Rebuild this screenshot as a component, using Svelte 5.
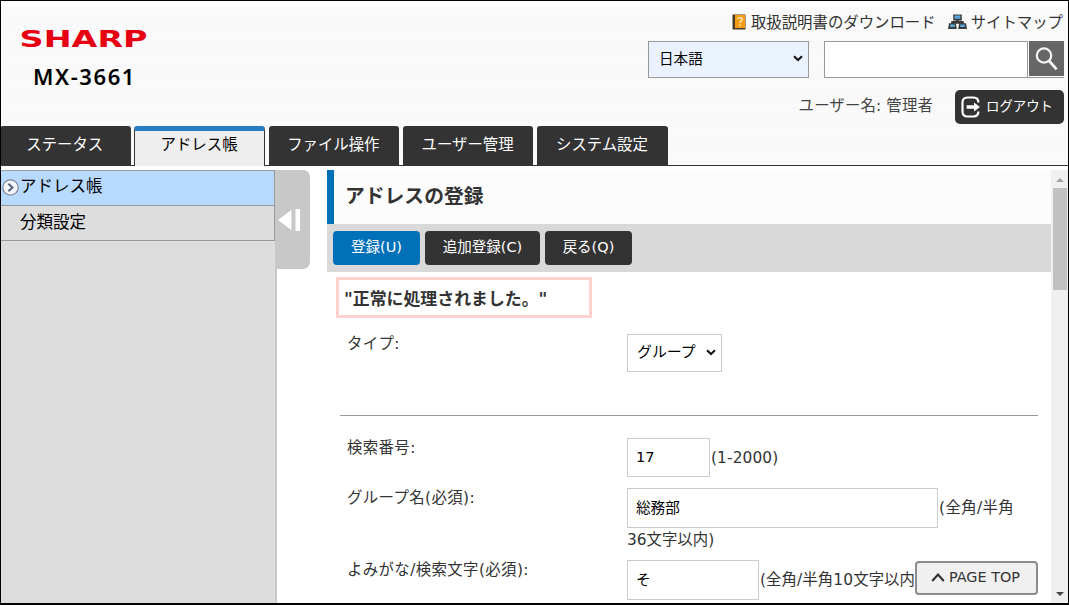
<script lang="ts">
  const tabs = ['ステータス', 'アドレス帳', 'ファイル操作', 'ユーザー管理', 'システム設定'];
  const menu = ['アドレス帳', '分類設定'];

  let activeTab = $state(1);
  let activeMenu = $state(0);
  let keyword = $state('');
  let searchNumber = $state('17');
  let groupName = $state('総務部');
  let reading = $state('そ');
</script>

<div class="window">
  <header>
    <div class="top">
      <div class="brand">
        <svg class="logo" width="140" height="36" viewBox="0 0 140 36" role="img" aria-label="SHARP">
          <text x="3.6" y="25.8" textLength="128" lengthAdjust="spacingAndGlyphs">SHARP</text>
        </svg>
        <div class="model">MX-3661</div>
      </div>

      <div class="tools">
        <div class="links">
          <a href="#manual">
            <svg width="14" height="16" viewBox="0 0 14 16">
              <rect x=".5" y=".5" width="13" height="15" fill="#4a3a28" />
              <rect x="3" y="1" width="10" height="13" fill="#f59c14" />
              <path d="M5.6 5.2Q5.8 3.6 8 3.6Q10.3 3.7 10.2 5.4Q10.1 6.6 8.8 7.2Q8 7.7 8 9M8 10.4V12" fill="none" stroke="#fff0c0" stroke-width="1.4" />
            </svg>
            <span>取扱説明書のダウンロード</span>
          </a>
          <a href="#sitemap">
            <svg width="19" height="16" viewBox="0 0 19 16">
              <path d="M9.5 5V8.4M4.5 11V8.4H14.5V11" fill="none" stroke="#3a3a3a" stroke-width="2.6" />
              <path d="M5.2 .6H13.8V6.6H5.2ZM1 9.2H7.8L8.8 15H0ZM11.2 9.2H18L19 15H10.2Z" fill="#3a3a3a" />
              <path d="M6.6 1.6H12.4V4.8H6.6ZM2.2 10.4H6.8V13H2.2ZM12.2 10.4H16.8V13H12.2Z" fill="#5aa9dc" />
            </svg>
            <span>サイトマップ</span>
          </a>
        </div>

        <div class="search-row">
          <button class="select language">
            <span>日本語</span>
            <svg width="10" height="7" viewBox="0 0 10 7"><path d="M1 1.2L5 5L9 1.2" /></svg>
          </button>
          <div class="search">
            <input bind:value={keyword} aria-label="検索" />
            <button aria-label="検索">
              <svg width="30" height="30" viewBox="0 0 30 30">
                <circle cx="10" cy="10.5" r="7.2" fill="none" stroke="#f4f4f4" stroke-width="2.2" />
                <path d="M15 15.8L22.6 24.4" stroke="#f4f4f4" stroke-width="2.8" />
              </svg>
            </button>
          </div>
        </div>

        <div class="user-row">
          <span class="user">ユーザー名: 管理者</span>
          <button class="logout">
            <svg width="20" height="22" viewBox="0 0 20 22">
              <path d="M17.4 6.4Q17.4 1.5 12.5 1.5H6.5Q1.5 1.5 1.5 6.5V15.5Q1.5 20.5 6.5 20.5H12.5Q17.4 20.5 17.4 15.6" fill="none" stroke="#fff" stroke-width="2.2" />
              <path d="M5.6 9.2H13V6.5L19 11L13 15.5V12.8H5.6Z" fill="#fff" />
            </svg>
            <span>ログアウト</span>
          </button>
        </div>
      </div>
    </div>

    <nav class="tabs">
      {#each tabs as tab, index}
        <button class="tab" class:active={index === activeTab} onclick={() => (activeTab = index)}>
          {tab}
        </button>
      {/each}
    </nav>
  </header>

  <div class="body">
    <aside>
      {#each menu as item, index}
        <button class="item" class:current={index === activeMenu} onclick={() => (activeMenu = index)}>
          <span class="mark">
            {#if index === activeMenu}
              <svg width="17" height="17" viewBox="0 0 17 17">
                <circle cx="8.5" cy="8.5" r="7.7" fill="#f4f5f9" stroke="#7d879c" stroke-width="1.2" />
                <path d="M6.4 4.8L10.4 8.5L6.4 12.2" fill="none" stroke="#5c6784" stroke-width="2.2" />
              </svg>
            {/if}
          </span>
          {item}
        </button>
      {/each}
    </aside>

    <button class="handle" aria-label="メニューを閉じる">
      <svg width="22" height="22" viewBox="0 0 22 22">
        <path d="M0 11L13.4 1V21Z" fill="#fff" />
        <rect x="17.5" y="0" width="4.5" height="22" fill="#fff" />
      </svg>
    </button>

    <main>
      <h1>アドレスの登録</h1>
      <div class="toolbar">
        <button class="primary">登録(U)</button>
        <button class="wide">追加登録(C)</button>
        <button>戻る(Q)</button>
      </div>

      <p class="message">"正常に処理されました。"</p>

      <div class="row type">
        <span class="label">タイプ:</span>
        <button class="select group">
          <span>グループ</span>
          <svg width="10" height="7" viewBox="0 0 10 7"><path d="M1 1.2L5 5L9 1.2" /></svg>
        </button>
      </div>

      <hr />

      <div class="row number">
        <label class="label" for="number">検索番号:</label>
        <div class="field"><input id="number" bind:value={searchNumber} /><span class="hint">(1-2000)</span></div>
      </div>
      <div class="row name">
        <label class="label" for="name">グループ名(必須):</label>
        <div>
          <div class="field"><input id="name" bind:value={groupName} /><span class="hint spaced">(全角/半角</span></div>
          <div class="rest">36文字以内)</div>
        </div>
      </div>
      <div class="row reading">
        <label class="label" for="reading">よみがな/検索文字(必須):</label>
        <div class="field"><input id="reading" bind:value={reading} /><span class="hint">(全角/半角10文字以内</span></div>
      </div>
    </main>

    <div class="scrollbar">
      <svg width="8" height="4" viewBox="0 0 8 4"><path d="M0 4L4 0L8 4Z" fill="#a0a0a0" /></svg>
      <div class="thumb"></div>
      <svg class="down" width="8" height="4" viewBox="0 0 8 4"><path d="M0 0L4 4L8 0Z" fill="#444" /></svg>
    </div>
  </div>

  <button class="page-top">
    <svg width="14" height="9" viewBox="0 0 14 9"><path d="M1.2 8L7 1.6L12.8 8" fill="none" stroke="#333" stroke-width="2.2" /></svg>
    <span>PAGE TOP</span>
  </button>
</div>

<style>
  :global(body) {
    margin: 0;
    background: #fff;
  }

  .window {
    position: relative;
    box-sizing: border-box;
    width: 1069px;
    height: 605px;
    border: 1px solid #000;
    border-bottom-width: 2px;
    overflow: hidden;
    display: flex;
    flex-direction: column;
    background: #fff;
    color: #333;
    font-family: 'DejaVu Sans', 'Noto Sans CJK JP', sans-serif;
    font-size: 15.4px;
    line-height: 20px;
  }

  .window * {
    box-sizing: border-box;
  }

  button,
  input {
    margin: 0;
    padding: 0;
    border: 0;
    border-radius: 0;
    background: none;
    color: inherit;
    font: inherit;
    white-space: nowrap;
  }

  svg {
    display: block;
    flex: none;
  }

  header {
    flex: none;
    height: 165px;
    border-bottom: 1px solid #333;
    background: linear-gradient(#fff 6px, transparent 6px),
      repeating-linear-gradient(#fafafa 0 4px, #f8f8f8 4px 6px);
    display: flex;
    flex-direction: column;
  }

  .top {
    flex: none;
    height: 125px;
    display: flex;
    justify-content: space-between;
  }

  .brand {
    padding: 20px 0 0 15px;
  }

  .logo text {
    font: bold 23.4px 'DejaVu Sans', sans-serif;
    fill: #e60012;
  }

  .model {
    margin: 8px 0 0 17px;
    color: #000;
    font-size: 22px;
    font-weight: 600;
    line-height: 22px;
    font-family: 'Noto Sans', sans-serif;
    letter-spacing: 1.6px;
  }

  .tools {
    width: 420px;
    padding: 11px 4px 0 0;
    display: flex;
    flex-direction: column;
    align-items: flex-end;
  }

  .links {
    display: flex;
    gap: 12px;
    height: 20px;
    padding-right: 1px;
  }

  .links a {
    display: flex;
    align-items: center;
    gap: 4px;
    color: #333;
    text-decoration: none;
  }

  .links span {
    padding-top: 1px;
  }

  .links svg {
    margin-top: -1px;
  }

  .links a:first-child {
    gap: 5px;
  }

  .search-row {
    display: flex;
    gap: 15px;
    margin-top: 9px;
  }

  .select {
    display: flex;
    align-items: center;
    justify-content: space-between;
    color: #000;
    font-size: 14.6px;
  }

  .select path {
    fill: none;
    stroke: #111;
    stroke-width: 2;
  }

  .language {
    width: 161px;
    height: 37px;
    padding: 0 5px 2px 10px;
    border: 1px solid #999;
    background: #eaf1ff;
  }

  .search {
    display: flex;
    width: 240px;
    height: 37px;
    border-bottom: 1px solid #999;
  }

  .search input {
    width: 204px;
    border: 1px solid #999;
    border-bottom: 0;
    background: #fff;
  }

  .search button {
    width: 36px;
    height: 35px;
    padding: 3px 0 0 5px;
    border-left: 1px solid #fff;
    background: #666;
  }

  .user-row {
    display: flex;
    gap: 22px;
    margin-top: 12px;
  }

  .user {
    padding-top: 6px;
    color: #444;
    letter-spacing: 0.15px;
  }

  .logout {
    width: 109px;
    height: 34px;
    padding-left: 6px;
    border-radius: 5px;
    background: #333;
    color: #fff;
    font-size: 13.4px;
    display: flex;
    align-items: center;
    gap: 5px;
  }

  .logout span {
    padding-bottom: 1px;
  }

  .tabs {
    display: flex;
    gap: 3.8px;
    height: 39px;
    margin: auto 0 0 -1px;
  }

  .tab {
    flex: none;
    width: 130.5px;
    height: 39px;
    padding: 0 1px 1px 0;
    border-radius: 3px 3px 0 0;
    background: #333;
    color: #fff;
  }

  .tab.active {
    height: 40px;
    padding-bottom: 7px;
    border: 1px solid #333;
    border-top: 5px solid #267dc5;
    border-bottom: 0;
    background: #eee;
    color: #000;
  }

  .body {
    flex: 1;
    min-height: 0;
    padding-top: 4px;
    display: flex;
    align-items: stretch;
  }

  aside {
    width: 276px;
    margin-right: -2px;
    border-right: 2px solid #c8c8c8;
    background: #ddd;
    display: flex;
    flex-direction: column;
  }

  .item {
    height: 35px;
    padding-bottom: 1px;
    border: 1px solid #999;
    border-width: 0 1px 1px 0;
    color: #000;
    font-size: 16.5px;
    display: flex;
    align-items: center;
  }

  .item.current {
    height: 36px;
    padding-bottom: 2px;
    border-top-width: 1px;
    background: #b8daff;
  }

  .mark {
    width: 19px;
    padding: 1px 0 0 1px;
  }

  .handle {
    width: 35px;
    height: 99px;
    padding-left: 3px;
    border-radius: 0 7px 7px 0;
    background: #c8c8c8;
  }

  main {
    width: 724px;
    margin-left: 17px;
    overflow: hidden;
  }

  h1 {
    margin: 0;
    height: 54px;
    padding: 13px 0 0 11px;
    border-left: 7px solid #0070b8;
    background: #fcfcfc;
    font-size: 19.8px;
    line-height: 27px;
  }

  .toolbar {
    height: 48px;
    padding: 7px 6px;
    background: #d9d9d9;
    display: flex;
    gap: 5px;
  }

  .toolbar button {
    width: 87px;
    height: 34px;
    padding-bottom: 2px;
    border-radius: 4px;
    background: #333;
    color: #fff;
    font-size: 14.5px;
  }

  .toolbar .primary {
    background: #0070b8;
  }

  .toolbar .wide {
    width: 115px;
  }

  .message {
    width: 256px;
    height: 41px;
    margin: 5px 0 0 9px;
    padding: 9px 0 0 5px;
    border: 3px solid #ffd0d0;
    font-size: 16.9px;
    font-weight: bold;
  }

  .row {
    display: grid;
    grid-template-columns: 280px 1fr;
    padding-left: 20px;
    align-items: start;
    white-space: nowrap;
  }

  .label {
    letter-spacing: 0.4px;
  }

  .type {
    margin-top: 16px;
  }

  .group {
    width: 95px;
    height: 38px;
    padding: 0 5px 2px 9px;
    border: 1px solid #ccc;
    background: #fff;
    font-size: 14.9px;
  }

  hr {
    height: 1px;
    margin: 43px 13px 22px;
    border: 0;
    background: #999;
  }

  .field {
    display: flex;
    align-items: center;
    gap: 1px;
  }

  .field input {
    height: 40px;
    padding: 0 8px 3px;
    border: 1px solid #ccc;
    background: #fff;
    color: #000;
    font-size: 14.6px;
  }

  .hint {
    letter-spacing: 0.1px;
  }

  .spaced {
    letter-spacing: 0.4px;
  }

  #number {
    width: 83px;
    height: 39px;
  }

  #name {
    width: 311px;
  }

  #reading {
    width: 132px;
  }

  .name {
    margin-top: 11px;
  }

  .rest {
    height: 32px;
    padding-top: 2px;
  }

  .scrollbar {
    width: 17px;
    padding: 8px 1px 0 2px;
    background: #f0f0f0;
    display: flex;
    flex-direction: column;
    align-items: center;
  }

  .thumb {
    width: 14px;
    height: 102px;
    margin-top: 6px;
    background: #c1c1c1;
  }

  .down {
    margin: auto 0 7px;
  }

  .page-top {
    position: absolute;
    right: 30px;
    bottom: 8px;
    width: 123px;
    height: 34px;
    padding: 0 0 2px 14px;
    border: 2px solid #8c8c8c;
    border-radius: 4px;
    background: #f0f0f0;
    font-size: 14.4px;
    display: flex;
    align-items: center;
    gap: 4px;
  }
</style>
